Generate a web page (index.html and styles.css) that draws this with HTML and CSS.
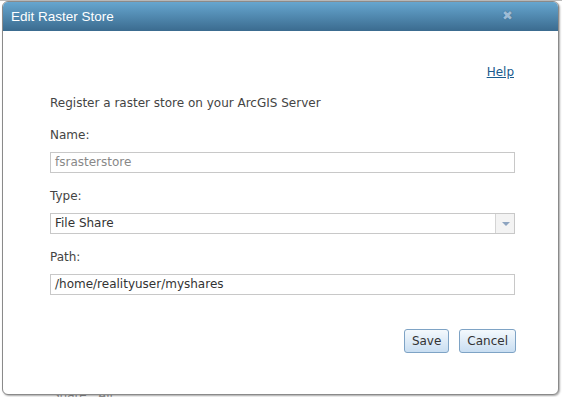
FILE: index.html
```html
<!DOCTYPE html>
<html lang="en">
<head>
    <meta charset="UTF-8">
    <title>Edit Raster Store</title>
    <link rel="stylesheet" href="styles.css">
</head>
<body>
    <div class="backdrop">
        <div class="under">Share &nbsp; All</div>
    </div>
    <div class="dialog">
        <div class="titlebar">
            <span class="title">Edit Raster Store</span>
            <span class="close">&#x2716;</span>
        </div>
        <div class="content">
            <div class="help-row"><a href="#" class="help">Help</a></div>
            <p class="intro">Register a raster store on your ArcGIS Server</p>

            <label class="field-label">Name:</label>
            <div class="input disabled">fsrasterstore</div>

            <label class="field-label">Type:</label>
            <div class="input select">
                <span class="select-value">File Share</span>
                <span class="select-arrow"></span>
            </div>

            <label class="field-label">Path:</label>
            <div class="input">/home/realityuser/myshares</div>

            <div class="actions">
                <button class="btn">Save</button>
                <button class="btn">Cancel</button>
            </div>
        </div>
    </div>
</body>
</html>
```

FILE: styles.css
```css
* { margin: 0; padding: 0; box-sizing: border-box; }

body {
    font-family: 'DejaVu Sans', Verdana, sans-serif;
    font-size: 12px;
    color: #444;
    background: #fff;
    width: 562px;
    height: 397px;
    overflow: hidden;
    position: relative;
}

.backdrop {
    position: absolute;
    inset: 0;
    border-top: 1px solid #bbb;
}

.under {
    position: absolute;
    left: 52px;
    top: 387px;
    color: #999;
}

.dialog {
    position: absolute;
    left: 2px;
    top: 1px;
    width: 557px;
    height: 394px;
    background: #fff;
    border: 1px solid #8a8a8a;
    border-radius: 6px;
    box-shadow: 1px 1px 2px rgba(0, 0, 0, 0.35);
    overflow: hidden;
}

.titlebar {
    height: 29px;
    background: linear-gradient(#66a6cf, #3b6b8f);
    display: flex;
    align-items: center;
    justify-content: space-between;
    padding: 0 45px 0 8px;
}

.title {
    color: #fff;
    font-family: 'Liberation Sans', Arial, sans-serif;
    font-size: 13.5px;
}

.close {
    color: #9dbcd6;
    font-size: 13px;
    margin-top: -2px;
    text-shadow: 0 0 1px #2f5a7a;
}

.content {
    padding: 34px 43px 0 47px;
}

.help-row {
    display: flex;
    justify-content: flex-end;
    margin-right: 1px;
}

.help {
    color: #1a5b8e;
    text-decoration: underline;
}

.intro {
    margin-top: 17px;
    padding-bottom: 2px;
}

.field-label {
    display: block;
    margin-top: 16px;
    margin-bottom: 10px;
}

.input {
    height: 21px;
    border: 1px solid #c8c8c8;
    padding: 0 4px;
    line-height: 19px;
    color: #333;
}

.input.disabled {
    color: #888;
}

.select {
    display: flex;
    padding-right: 0;
}

.select-value {
    flex: 1;
}

.select-arrow {
    width: 19px;
    border-left: 1px solid #d4d4d4;
    background: #f3f3f3;
    position: relative;
}

.select-arrow::after {
    content: "";
    position: absolute;
    left: 6px;
    top: 8px;
    border-left: 4px solid transparent;
    border-right: 4px solid transparent;
    border-top: 4px solid #8da4c0;
}

.actions {
    display: flex;
    justify-content: flex-end;
    gap: 10px;
    margin-top: 34px;
    margin-right: -1px;
}

.btn {
    font-family: inherit;
    font-size: 12px;
    color: #333;
    height: 24px;
    padding: 0 7px;
    border: 1px solid #7ea3c5;
    border-radius: 3px;
    background: linear-gradient(#f4f9fd, #c9def2);
}
```
